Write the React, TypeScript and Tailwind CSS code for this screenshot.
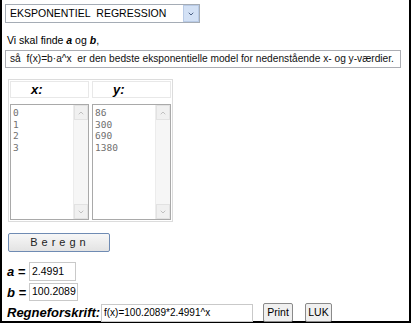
import { ChevronDown, ChevronUp } from "lucide-react";

function ScrollBox({ values }: { values: string[] }) {
  return (
    <div className="flex h-[116px] w-[79px] border border-[#a9a9a9] bg-white">
      <div className="flex-1 pl-[2px] pt-[2px] font-['DejaVu_Sans_Mono',monospace] text-[9.5px] leading-[11.7px] text-[#707070]">
        {values.map((v) => (
          <div key={v}>{v}</div>
        ))}
      </div>
      <div className="flex w-[15px] flex-col justify-between border-l border-[#ececec] bg-[#f6f6f6]">
        <div className="flex h-[15px] items-center justify-center border border-[#e2e2e2] bg-[#f0f0f0]">
          <ChevronUp size={8} className="text-[#c0c0c0]" strokeWidth={3} />
        </div>
        <div className="flex h-[15px] items-center justify-center border border-[#e2e2e2] bg-[#f0f0f0]">
          <ChevronDown size={8} className="text-[#c0c0c0]" strokeWidth={3} />
        </div>
      </div>
    </div>
  );
}

export default function App() {
  return (
    <div className="h-[324px] w-[412px] overflow-hidden bg-white font-['Liberation_Sans',Arial,sans-serif] text-black">
      <div className="flex h-[323px] w-[411px] flex-col border-b-2 border-l-2 border-r-2 border-black pl-[3px] pt-[4px] whitespace-nowrap">
        {/* model select */}
        <div className="flex h-[19px] w-[195px] shrink-0 items-center border border-[#a5acb5] bg-white">
          <span className="flex-1 pl-[4px] text-[10.5px]">EKSPONENTIEL&nbsp; REGRESSION</span>
          <div className="flex h-[17px] w-[16px] items-center justify-center border border-[#b9cbe6] bg-[#d3e1f5]">
            <ChevronDown size={8} className="text-[#4d6185]" strokeWidth={3} />
          </div>
        </div>

        <div className="mt-[11px] pl-[2px] text-[10.5px] leading-[13px]">
          Vi skal finde <b className="italic">a</b> og <b className="italic">b</b>,
        </div>
        <div className="mt-[3px] flex h-[18px] w-[396px] shrink-0 items-center border border-[#abadb3] pl-[4px] text-[10.2px] text-[#111]">
          så&nbsp; f(x)=b·a^x&nbsp; er den bedste eksponentielle model for nedenstående x- og y-værdier.
        </div>

        {/* data columns */}
        <div className="ml-[3px] mt-[11px] flex w-[165px] shrink-0 gap-[3px] border border-[#dcdcdc] p-[1px]">
          {[
            { label: "x:", values: ["0", "1", "2", "3"] },
            { label: "y:", values: ["86", "300", "690", "1380"] },
          ].map((col) => (
            <div key={col.label} className="flex flex-col gap-[6px]">
              <div className="flex h-[17px] w-[79px] items-center border border-[#e8e8e8] pl-[20px] text-[13px] font-bold italic">
                {col.label}
              </div>
              <ScrollBox values={col.values} />
            </div>
          ))}
        </div>

        <button className="ml-[3px] mt-[11px] h-[19px] w-[102px] shrink-0 rounded-[2px] border border-[#6f8bb3] bg-gradient-to-b from-[#f7f7f7] to-[#e3e3e3] pl-[2px] text-[11px] tracking-[4px] text-[#222]">
          Beregn
        </button>

        <div className="mt-[10px] flex flex-col gap-[1px]">
          <div className="flex items-center">
            <span className="w-[24px] pl-[2px] text-[13px] font-bold italic">a =</span>
            <div className="flex h-[19px] w-[47px] items-center border border-[#c9c9c9] pl-[2px] text-[10.5px]">2.4991</div>
          </div>
          <div className="flex items-center">
            <span className="w-[24px] pl-[2px] text-[13px] font-bold italic">b =</span>
            <div className="flex h-[18px] w-[49px] items-center border border-[#c9c9c9] pl-[2px] text-[10.5px]">100.2089</div>
          </div>
          <div className="flex items-center">
            <span className="w-[96px] pl-[2px] text-[13px] font-bold italic">Regneforskrift:</span>
            <div className="flex h-[18px] w-[152px] items-center border border-[#c9c9c9] pl-[2px] text-[10px]">
              f(x)=100.2089*2.4991^x
            </div>
            <button className="ml-[10px] h-[19px] w-[30px] rounded-[2px] border border-[#8a8a8a] bg-[#f0f0f0] text-[10.5px]">Print</button>
            <button className="ml-[12px] h-[19px] w-[27px] rounded-[2px] border border-[#8a8a8a] bg-[#f0f0f0] text-[10.5px]">LUK</button>
          </div>
        </div>
      </div>
    </div>
  );
}
